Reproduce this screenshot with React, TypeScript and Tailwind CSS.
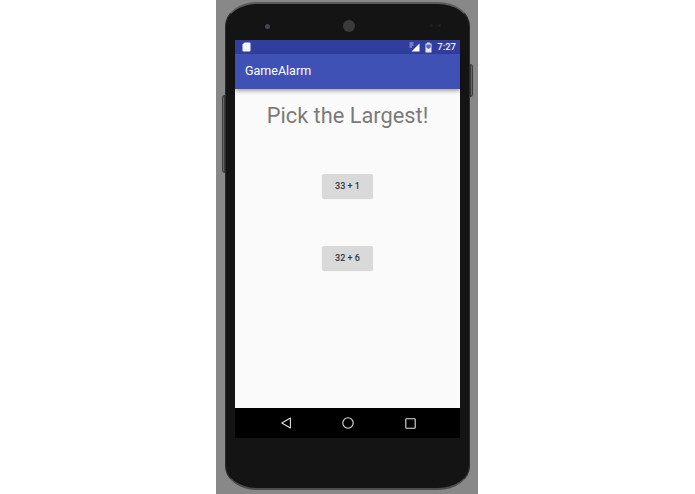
import { useState } from "react";

function StatusBar() {
  return (
    <div className="flex h-[14px] items-center bg-[#303f9f] pl-[7px] pr-[4px]">
      <svg width="9" height="10" viewBox="0 0 9 10">
        <path d="M2.5 0.5H7.5a1 1 0 0 1 1 1V8.5a1 1 0 0 1-1 1H1.5a1 1 0 0 1-1-1V2.5Z" fill="#f4f5fb" />
      </svg>
      <div className="ml-auto flex items-center">
        <svg width="11" height="10" viewBox="0 0 11 10">
          <path d="M10.5 1.5V9.5H2.5Z" fill="#fff" />
          <path d="M0.5 1H4.5M0.5 3H4.5M0.5 5H3" stroke="#c5cae9" strokeWidth="0.9" />
        </svg>
        <svg className="ml-[5px]" width="7" height="11" viewBox="0 0 7 11">
          <path d="M2.2 0.5H4.8V1.5H6.5V10.5H0.5V1.5H2.2Z" fill="#e6e8f4" />
          <path d="M1.3 2.4H5.7V5.4L3.5 7L1.3 5.4Z" fill="#5c6bc0" />
        </svg>
        <span className="ml-[5px] text-[9.5px] leading-none font-medium text-[#f2f3fa]">7:27</span>
      </div>
    </div>
  );
}

function NavBar() {
  return (
    <div className="flex h-[30px] items-center justify-center gap-[51px] bg-black pl-[1px]">
      <svg width="10" height="12" viewBox="0 0 10 12" fill="none" stroke="#e0e0e0" strokeWidth="1.1">
        <path d="M9.4 1V11L0.8 6Z" strokeLinejoin="round" />
      </svg>
      <svg width="12" height="12" viewBox="0 0 12 12" fill="none" stroke="#e0e0e0" strokeWidth="1.1">
        <circle cx="6" cy="6" r="5.2" />
      </svg>
      <svg width="11" height="11" viewBox="0 0 11 11" fill="none" stroke="#e0e0e0" strokeWidth="1.1">
        <rect x="0.8" y="0.8" width="9.4" height="9.4" rx="0.8" />
      </svg>
    </div>
  );
}

export default function App() {
  const [picked, setPicked] = useState<string | null>(null);
  const answers = ["33 + 1", "32 + 6"];

  return (
    <div
      className="h-[494px] w-[695px] overflow-hidden bg-white pl-[216px]"
      style={{ fontFamily: "Roboto, sans-serif" }}
    >
      <div className="h-[494px] w-[262px] overflow-hidden bg-[#888888] pt-[2px] pl-[9px]">
        <div className="relative h-[488px] w-[245px]">
          {/* side keys */}
          <div className="absolute top-[93px] -left-[3px] h-[78px] w-[3px] rounded-l-sm border border-[#3c3c3c] bg-[#666666]" />
          <div className="absolute top-[62px] -right-[3px] h-[33px] w-[3px] rounded-r-sm border border-[#3c3c3c] bg-[#666666]" />

          <div className="h-[488px] w-[245px] rounded-t-[32px_24px] rounded-b-[32px_24px] border-x border-t-2 border-b-2 border-x-[#2c2c2c] border-t-[#5c5c5c] border-b-[#4c4c4c] bg-[#141414] px-[9px] pt-[36px]">
            {/* earpiece and camera */}
            <div className="absolute top-[22px] left-[40px] size-[5px] rounded-full bg-[#3f4658]" />
            <div className="absolute top-[18px] left-[118px] size-[12px] rounded-full bg-[#3b3b3b]" />
            <div className="absolute top-[22px] left-[205px] flex gap-[5px]">
              <div className="size-[3px] rounded-full bg-[#222222]" />
              <div className="size-[3px] rounded-full bg-[#222222]" />
            </div>

            <div className="flex h-[398px] w-[225px] flex-col bg-[#fafafa]">
              <StatusBar />
              <div className="z-10 flex h-[35px] shrink-0 items-center bg-[#3f51b5] pl-[10px] text-[12.5px] font-normal text-white shadow-[0_2px_4px_rgba(0,0,0,0.35)]">
                GameAlarm
              </div>
              <div className="flex flex-1 flex-col items-center">
                <h1 className="mt-[12px] text-[21.8px] leading-[30px] font-normal text-[#7a7a7a]">
                  Pick the Largest!
                </h1>
                <div className="mt-[43px] flex flex-col gap-[48px]">
                  {answers.map((a) => (
                    <button
                      key={a}
                      type="button"
                      onClick={() => setPicked(a)}
                      className={`h-[24px] w-[51px] rounded-[2px] pt-[1px] text-[9px] font-medium text-[#333333] shadow-[0_1px_1px_rgba(0,0,0,0.15)] ${
                        picked === a ? "bg-[#c8c8c8]" : "bg-[#d9d9d9]"
                      }`}
                    >
                      {a}
                    </button>
                  ))}
                </div>
              </div>
              <NavBar />
            </div>
          </div>
        </div>
      </div>
    </div>
  );
}
